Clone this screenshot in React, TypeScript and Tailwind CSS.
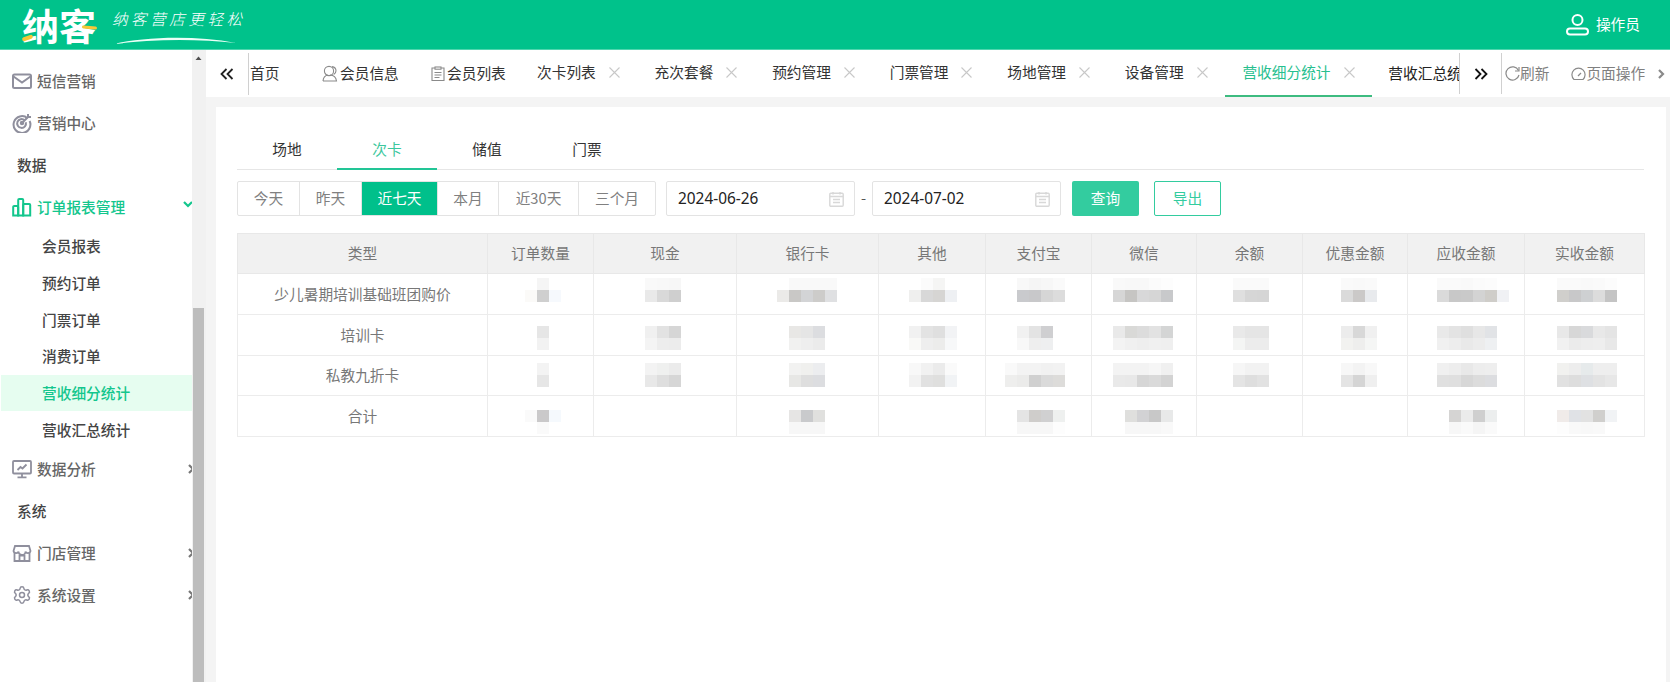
import React from "react";
import { Settings } from "lucide-react";

const FONT = "font-['Noto_Sans_CJK_SC','Noto_Sans',sans-serif]";

function Ic({ size = 20, color = "#8f8f9d", sw = 1.8, children, className = "" }: { size?: number; color?: string; sw?: number; children: React.ReactNode; className?: string }) {
  return (
    <svg width={size} height={size} viewBox="0 0 20 20" fill="none" stroke={color} strokeWidth={sw} className={"shrink-0 " + className}>
      {children}
    </svg>
  );
}

const MailI = () => (
  <Ic sw={2}><rect x="1" y="3.5" width="18" height="13.5" rx="1.5" /><path d="M1.5 5.5 10 11.5l8.5-6" /></Ic>
);
const TargetI = () => (
  <Ic sw={2}><path d="M15.5 5.2A8.4 8.4 0 1 0 17.6 8" /><path d="M12.6 7.3a4.4 4.4 0 1 0 1.2 2" /><circle cx="10" cy="10" r="1.2" fill="#8f8f9d" /><path d="m10 10 7-7M16 1v3h3" /></Ic>
);
const BarsI = () => (
  <Ic color="#13c68d" sw={2}><path d="M1.2 18.5V10a1 1 0 0 1 1-1h3a1 1 0 0 1 1 1v8.5z" /><path d="M6.2 18.5V3a1 1 0 0 1 1-1h3a1 1 0 0 1 1 1v15.5z" /><path d="M11.2 18.5V8a1 1 0 0 1 1-1h5a1 1 0 0 1 1 1v10.5z" /></Ic>
);
const MonitorI = () => (
  <Ic><rect x="1" y="2" width="18" height="12.5" rx="1" /><path d="M10 14.5V18M5.5 18.3h9" /><path d="m5.5 11 3-3 2 1.5 4-4" /></Ic>
);
const StoreI = () => (
  <Ic><path d="M3 3h14l1.5 5a2.6 2.6 0 0 1-5 .5 3 3 0 0 1-7 0 2.6 2.6 0 0 1-5-.5z" /><path d="M2.5 9.5V18h15V9.5" /><path d="M7.5 18v-5.5h5V18" /></Ic>
);
const GearI = () => <Settings size={20} color="#8f8f9d" strokeWidth={1.8} className="shrink-0" />;

const Chev = ({ down, color = "#777" }: { down?: boolean; color?: string }) => (
  <svg width="10" height="10" viewBox="0 0 10 10" fill="none" stroke={color} strokeWidth="2.2" className="shrink-0">
    {down ? <path d="m1 3 4 4 4-4" /> : <path d="m3 1 4 4-4 4" />}
  </svg>
);

const Top = ({ icon, label, chev, open, green }: { icon: React.ReactNode; label: string; chev?: boolean; open?: boolean; green?: boolean }) => (
  <div className="h-[42px] flex items-center pl-[12px] pr-0">
    <div className="w-[25px] flex">{icon}</div>
    <span className={"text-[14.7px] font-medium flex-1 " + (green ? "text-[#13c68d] font-bold" : "text-[#666666]")}>{label}</span>
    {chev && (
      <div className={"w-[10px] " + (green ? "-mr-[1px] -mt-[6px]" : "-mr-[4px]")}>
        {open ? <Chev down color="#13c68d" /> : <Chev />}
      </div>
    )}
  </div>
);
const Sec = ({ label }: { label: string }) => (
  <div className="h-[42px] flex items-center pl-[17px] text-[14.7px] font-medium text-[#444444]">{label}</div>
);
const Sub = ({ label, active }: { label: string; active?: boolean }) => (
  <div className={"h-[36.67px] flex items-center text-[14.7px] font-medium " + (active ? "bg-[#e6fdf0] text-[#13c68d] font-bold ml-[1px] pl-[41px]" : "pl-[42px] text-[#444444]")}>{label}</div>
);

const X = () => (
  <svg width="11" height="11" viewBox="0 0 11 11" stroke="#c8c8c8" strokeWidth="1.1" className="shrink-0 ml-[13px]">
    <path d="m.5.5 10 10M10.5.5l-10 10" />
  </svg>
);
const Tab = ({ label, active }: { label: string; active?: boolean }) => (
  <div className={"h-full flex items-center pl-[17px] pr-[17.8px] shrink-0 border-b-2 " + (active ? "text-[#27bf8f] border-[#3dbb80]" : "border-transparent")}>
    <span>{label}</span>
    <X />
  </div>
);

const Cols = [250, 106, 143, 142, 107, 106, 105, 106, 105, 117, 120];
const ColLefts = Cols.reduce<number[]>((a, w, i) => [...a, (a[i - 1] ?? 237) + (i ? Cols[i - 1] : 0)], []);
const Head = ["类型", "订单数量", "现金", "银行卡", "其他", "支付宝", "微信", "余额", "优惠金额", "应收金额", "实收金额"];
const Names = ["少儿暑期培训基础班团购价", "培训卡", "私教九折卡", "合计"];
const TopPad = [4, 11, 7, 14];

type M = [number, string, string] | null;
const W = "fff";
const Data: M[][] = [
  [[524, `${W} f5f5f5 ${W}`, "fbfaf8 cfcfcf f6f9fd"], [644, "f9f9f9 f8f8f8 f7f7f7", "e9e9e9 d9d9d9 cfcfcf"], [776, `${W} f9f9f9 f9f9f9 f9f9f9 f9f9f9`, "ebeae8 c9c8c6 d3d4d6 cdccca dfe0e2"], [908, `${W} fbfbfb f5f5f4 ${W}`, "efefee d8d8d8 d6d5d3 eef0f3"], [1016, "f8f8f8 f5f5f5 f7f7f7 fafafa", "c9cacd c8c8ca d6d6d6 dcdcdc"], [1112, "f9f9f9 f8f8f8 f8f8f8 fbfbfb fdfdfd", "d6d6d6 c6c5c3 d8d8d9 d6d6d6 c8c9cb"], [1232, "fafafa fafafa fafafa", "dfdfdf d6d6d6 d5d5d5"], [1340, "fafafa f9f9f9 fafafa", "dadada cbc9c8 e8eaed"], [1436, "fafafa fafafa f9f9f9 fbfbfb fcfcfc ffffff", "dadada c8c8c8 c9c9c9 d3d3d3 cfcdc9 f0f1f4"], [1556, "fafafa fafafa f9f9f9 fafafa fcfcfc", "d0cfcc c8c8c9 ced0d2 dcdcdc c4c4c4"]],
  [[536, "e6e6e6", "f2f2f2"], [644, "f0f0f0 e2e2e2 d6d6d6", "f4f4f4 ededed ececec"], [788, "e8e7e5 e5e5e5 dcdde0", "f1f1f0 eeeeee ebebeb"], [908, "f1f1f1 e3e3e3 dfdfdf f2f3f5", "f9f9f7 eeeeee ececeb f7f8f9"], [1016, "f1f1f1 e3e3e3 cfcfd1", "f8f8f8 eeeeee eeeff0"], [1112, "e9e9e9 d9d9d7 dcdcdc e2e2e2 d4d5d5", "f3f3f3 f0f0f0 eeeeee f0f0f0 efefef"], [1232, "e9e9e9 e5e5e5 e5e5e5", "f4f5f4 ececec ececec"], [1340, "ececec d8d8d8 f0f0f0", "f2f2f0 eeeeed f5f6f5"], [1436, "e9e9e9 e3e3e3 dfdfdf e7e7e7 e1e3e6", "f0f0f0 ededed e9e9e9 ececec eef0f2"], [1556, "e8e8e8 d7d7d7 d9dadc e8e8e8 e4e4e4", "f1f1f1 ebebeb ededed eeeeee e8e8e8"]],
  [[536, "f3f3f3", "e6e6e6"], [644, "f3f3f3 eff0ef ebebeb", "e8e8e8 dedede d6d6d6"], [788, "f2f2f1 f0f0ee ecedef", "e7e7e5 dedede dcdde0"], [908, "f8f8f8 f1f1f1 ebebeb fafafa", "f2f2f2 e1e1e1 dfdfde f1f3f5"], [1004, "f9f9f9 f3f3f3 f3f3f3 f1f1f1 f2f2f2", "eeeeed ebebea d0d0d0 dadada dddcda"], [1112, "f3f3f3 f3f3f3 f3f3f3 f6f6f6 f0f0f0", "e9e9e9 e8e8e8 d6d6d6 dadada d3d3d3"], [1232, "f6f6f6 f2f2f2 f2f2f2", "e4e4e4 dedede e2e2e2"], [1340, "f7f7f7 f3f3f3 f8f8f8", "e4e4e4 d5d5d5 efefef"], [1436, "f0f0f0 ededed e8e8e8 ededed eeeeee", "e0e0e0 dfdfdf d7d7d7 dcdcdc dcdde0"], [1556, "f1f1ef ededed e6eaeb eeeeee eeeeee", "e1e1e1 dddddd dee0e3 e3e3e3 e7e7e7"]],
  [[524, "fafafa cac9ca f5f9fd", `${W} fafafa ${W}`], null, [788, "e6e5e4 c9cacc e0e0de", "f7f7f7 f7f7f7 f7f7f7"], null, [1016, "e4e4e4 cfcdcb d0d0d1 eef0ef", "f7f7f7 f7f7f7 f7f7f7 fdfdfd"], [1124, "dfdfdd d2d2d4 c8c8c8 e8e9e9", "f7f7f7 f7f7f7 f7f7f7 f9f9f9"], null, null, [1448, "d5d4d3 ebebeb cfcfcf eceeee", "f7f7f7 fafafa f5f5f5 fafafa"], [1556, "f0ebe9 e0e2e6 e2e2e2 d0cfcd f1f3f5", "fdfdfd f9f9f9 f8f8f8 f9f9f9 ffffff"]],
];

const Mosaic = ({ m, left, pad }: { m: M; left: number; pad: number }) => {
  if (!m) return null;
  const [x, a, b] = m;
  return (
    <div style={{ paddingLeft: x - left, paddingTop: pad }}>
      {[a, b].map((row, i) => (
        <div key={i} className="flex">
          {row.split(" ").map((c, j) => (
            <div key={j} className="w-[12px] h-[12px]" style={{ background: "#" + (c === "fff" ? "ffffff" : c) }} />
          ))}
        </div>
      ))}
    </div>
  );
};

const Seg = ({ label, w, active }: { label: string; w: string; active?: boolean }) => (
  <div className={w + " flex items-center justify-center border-r border-[#e3e3e3] last:border-r-0 " + (active ? "bg-[#00c08b] text-white" : "text-[#808080]")}>{label}</div>
);

const Cal = () => (
  <svg width="15" height="16" viewBox="0 0 15 16" fill="none" stroke="#d8d8d8" strokeWidth="1.4">
    <rect x="0.8" y="2.2" width="13.4" height="13" rx="1" />
    <path d="M.8 5.5h13.4M4 1v2.5M11 1v2.5M4 8.5h7M4 11.5h7" />
  </svg>
);
const DateBox = ({ value, w }: { value: string; w: string }) => (
  <div className={w + " h-[35px] border border-[#e3e3e3] rounded-[2px] flex items-center justify-between pl-[11px] pr-[10px]"}>
    <span className="font-['Noto_Sans',sans-serif] text-[15.4px] text-[#222]">{value}</span>
    <Cal />
  </div>
);

export default function App() {
  return (
    <div className={FONT + " w-[1670px] h-[682px] overflow-hidden flex flex-col bg-white text-[14.7px] text-[#333]"}>
      <header className="h-[50px] shrink-0 bg-[#00c28b] border-b border-[#4fd5ae] flex items-center justify-between pl-[22px] pr-[30px]">
        <div className="flex items-center">
          <div className="relative text-[37px] leading-[48px] font-bold text-white w-[76px] whitespace-nowrap">
            纳客
            <span className="absolute left-[0px] bottom-[9px] w-[11px] h-[4px] bg-[#f7c736] -rotate-[20deg] rounded-sm" />
            <span className="absolute right-[1px] top-[25px] w-[15px] h-[3px] bg-[#f7c736] rotate-[5deg] rounded-sm" />
          </div>
          <div className="relative ml-[14px] w-[132px] h-[40px]">
            <div className="italic font-light text-[15.5px] leading-[20px] tracking-[3.6px] text-white pt-[3px] whitespace-nowrap">纳客营店更轻松</div>
            <svg width="124" height="10" viewBox="0 0 124 10" className="absolute left-[2px] top-[31px]" fill="none">
              <path d="M0 8C30 1 80 -1 122 7C85 3 40 3 0 8Z" fill="#eafff7" />
            </svg>
          </div>
        </div>
        <div className="flex items-center text-white">
          <svg width="23" height="23" viewBox="0 0 23 23" fill="none" stroke="#fff" strokeWidth="2">
            <circle cx="11.5" cy="7" r="5" />
            <rect x="1" y="15.5" width="21" height="6" rx="3" />
          </svg>
          <span className="ml-[7px]">操作员</span>
        </div>
      </header>

      <div className="flex-1 flex min-h-0">
        <aside className="w-[192px] shrink-0 pt-[10px] overflow-hidden">
          <Top icon={<MailI />} label="短信营销" />
          <Top icon={<TargetI />} label="营销中心" />
          <Sec label="数据" />
          <Top icon={<BarsI />} label="订单报表管理" chev open green />
          <Sub label="会员报表" />
          <Sub label="预约订单" />
          <Sub label="门票订单" />
          <Sub label="消费订单" />
          <Sub label="营收细分统计" active />
          <Sub label="营收汇总统计" />
          <Top icon={<MonitorI />} label="数据分析" chev />
          <Sec label="系统" />
          <Top icon={<StoreI />} label="门店管理" chev />
          <Top icon={<GearI />} label="系统设置" chev />
        </aside>

        <div className="w-[14px] shrink-0 bg-[#f1f1f1] flex flex-col pl-[1px] pr-[2px]">
          <svg width="11" height="8" viewBox="0 0 11 8" className="mt-[5px]"><path d="M5.5 1.5 8.5 5h-6z" fill="#505050" /></svg>
          <div className="mt-[245px] flex-1 bg-[#bdbdbd]" />
        </div>

        <main className="flex-1 min-w-0 bg-[#f4f4f4] flex flex-col">
          <div className="h-[47px] shrink-0 bg-white flex items-stretch text-[14.7px]">
            <div className="w-[43px] shrink-0 flex items-center justify-center relative">
              <svg width="14" height="12" viewBox="0 0 14 12" fill="none" stroke="#222" strokeWidth="1.8" className="-ml-[1px]"><path d="M6.5 1 1.5 6l5 5M12.5 1l-5 5 5 5" /></svg>
              <span className="absolute right-0 top-[3px] bottom-[2px] w-px bg-[#d0d0d0]" />
            </div>
            <div className="w-[1210px] shrink-0 overflow-hidden flex items-stretch whitespace-nowrap pl-[1px]">
              <div className="h-full flex items-center shrink-0 w-[72px]">首页</div>
              <div className="h-full flex items-center shrink-0 w-[109px]">
                <svg width="16" height="17" viewBox="0 0 16 17" fill="none" stroke="#8a8a8a" strokeWidth="1.1" className="mr-[2px]">
                  <circle cx="7" cy="6" r="4.6" /><path d="M1 16c.3-3.5 2.6-5.6 5-6M8 10c3 .2 6 2.2 6.5 6H1M10 1.6c2.4.3 4 2 4 4.2 0 1.6-1 3-2.3 3.7" />
                </svg>
                会员信息
              </div>
              <div className="h-full flex items-center shrink-0 w-[89px]">
                <svg width="14" height="15" viewBox="0 0 14 15" fill="none" stroke="#8a8a8a" strokeWidth="1.1" className="mr-[2px]">
                  <path d="M4 2H1v12.5h12V2h-3" /><rect x="4" y="1" width="6" height="2.2" /><path d="M3.5 6.5h7M3.5 9h7M3.5 11.5h5" />
                </svg>
                会员列表
              </div>
              <Tab label="次卡列表" />
              <Tab label="充次套餐" />
              <Tab label="预约管理" />
              <Tab label="门票管理" />
              <Tab label="场地管理" />
              <Tab label="设备管理" />
              <Tab label="营收细分统计" active />
              <div className="h-full flex items-center pl-[16px] text-[#222] shrink-0">营收汇总统计</div>
            </div>
            <div className="w-[43px] shrink-0 border-x border-[#d0d0d0] my-[3px] flex items-center justify-center">
              <svg width="14" height="12" viewBox="0 0 14 12" fill="none" stroke="#111" strokeWidth="1.8"><path d="m1.5 1 5 5-5 5M7.5 1l5 5-5 5" /></svg>
            </div>
            <div className="flex-1 flex items-center text-[#808080] pl-[3px]">
              <svg width="15" height="15" viewBox="0 0 15 15" fill="none" stroke="#8a8a8a" strokeWidth="1.2"><path d="M13.5 4.5A6.6 6.6 0 1 0 14 9" /><path d="M14 1v4h-4" /></svg>
              <span>刷新</span>
              <svg width="15" height="15" viewBox="0 0 15 15" fill="none" stroke="#8a8a8a" strokeWidth="1.2" className="ml-[22px]"><path d="M3 13.5a6.6 6.6 0 1 1 9 0z" /><path d="m7 10 3-3" /></svg>
              <span>页面操作</span>
              <div className="ml-[11px]"><Chev color="#8a8a8a" /></div>
            </div>
          </div>

          <div className="flex-1 min-h-0 pt-[10px] pl-[10px] pr-[4px]">
            <div className="h-full bg-white pl-[21px] pr-[22px] pt-[23px]">
              <div className="h-[40px] border-b border-[#e6e6e6] flex text-[14.7px]">
                {["场地", "次卡", "储值", "门票"].map((t, i) => (
                  <div key={t} className={"w-[100px] h-[40px] flex items-center justify-center border-b-2 " + (i === 1 ? "border-[#22c596] text-[#3cc79d]" : "border-transparent text-[#333]")}>{t}</div>
                ))}
              </div>
              <div className="flex mt-[11px] items-start">
                <div className="flex h-[35px] border border-[#e3e3e3] rounded-[2px] overflow-hidden w-[419px]">
                  <Seg label="今天" w="w-[62px]" />
                  <Seg label="昨天" w="w-[62px]" />
                  <Seg label="近七天" w="w-[76px]" active />
                  <Seg label="本月" w="w-[61px]" />
                  <Seg label="近30天" w="w-[80px]" />
                  <Seg label="三个月" w="w-[76px]" />
                </div>
                <div className="ml-[10px]"><DateBox value="2024-06-26" w="w-[189px]" /></div>
                <div className="w-[17px] h-[35px] flex items-center justify-center text-[#555]">-</div>
                <DateBox value="2024-07-02" w="w-[189px]" />
                <div className="ml-[11px] w-[67px] h-[35px] bg-[#33cc9f] rounded-[2px] text-white flex items-center justify-center">查询</div>
                <div className="ml-[15px] w-[67px] h-[35px] border border-[#33cc9f] rounded-[2px] text-[#33cc9f] flex items-center justify-center">导出</div>
              </div>
              <table className="mt-[17px] w-[1407px] table-fixed border-collapse text-[#777777] text-[14.7px]">
                <colgroup>
                  <col className="w-[250px]" /><col className="w-[106px]" /><col className="w-[143px]" /><col className="w-[142px]" /><col className="w-[107px]" /><col className="w-[106px]" /><col className="w-[105px]" /><col className="w-[106px]" /><col className="w-[105px]" /><col className="w-[117px]" /><col className="w-[120px]" />
                </colgroup>
                <thead>
                  <tr className="h-[40px]">
                    {Head.map((h) => (
                      <th key={h} className="font-normal bg-[#f1f1f1] border border-[#e8e8e8] p-0 text-center">{h}</th>
                    ))}
                  </tr>
                </thead>
                <tbody>
                  {Names.map((n, r) => (
                    <tr key={n} className="h-[40.75px]">
                      <td className="border border-[#ececec] p-0 text-center">{n}</td>
                      {Data[r].map((m, c) => (
                        <td key={c} className="border border-[#ececec] p-0 align-top">
                          <Mosaic m={m} left={ColLefts[c + 1]} pad={TopPad[r]} />
                        </td>
                      ))}
                    </tr>
                  ))}
                </tbody>
              </table>
            </div>
          </div>
        </main>
      </div>
    </div>
  );
}
